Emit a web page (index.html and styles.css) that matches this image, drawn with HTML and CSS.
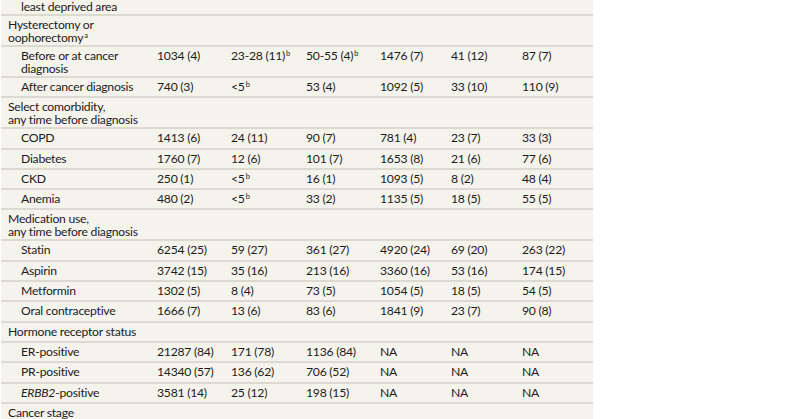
FILE: index.html
```html
<!DOCTYPE html>
<html lang="en">
<head>
<meta charset="utf-8">
<title>Table</title>
<link rel="stylesheet" href="styles.css">
</head>
<body>
<div class="table">
  <div class="row">
    <div class="label sub">Lives in the<br>least deprived area</div>
    <div class="val">5109 (20)</div><div class="val">41 (19)</div><div class="val">262 (19)</div><div class="val">4313 (21)</div><div class="val">70 (21)</div><div class="val">245 (21)</div>
  </div>
  <div class="row">
    <div class="label">Hysterectomy or<br>oophorectomy<sup>a</sup></div>
  </div>
  <div class="row">
    <div class="label sub">Before or at cancer<br>diagnosis</div>
    <div class="val">1034 (4)</div><div class="val">23-28 (11)<sup>b</sup></div><div class="val">50-55 (4)<sup>b</sup></div><div class="val">1476 (7)</div><div class="val">41 (12)</div><div class="val">87 (7)</div>
  </div>
  <div class="row single">
    <div class="label sub">After cancer diagnosis</div>
    <div class="val">740 (3)</div><div class="val">&lt;5<sup>b</sup></div><div class="val">53 (4)</div><div class="val">1092 (5)</div><div class="val">33 (10)</div><div class="val">110 (9)</div>
  </div>
  <div class="row">
    <div class="label">Select comorbidity,<br>any time before diagnosis</div>
  </div>
  <div class="row single">
    <div class="label sub">COPD</div>
    <div class="val">1413 (6)</div><div class="val">24 (11)</div><div class="val">90 (7)</div><div class="val">781 (4)</div><div class="val">23 (7)</div><div class="val">33 (3)</div>
  </div>
  <div class="row single">
    <div class="label sub">Diabetes</div>
    <div class="val">1760 (7)</div><div class="val">12 (6)</div><div class="val">101 (7)</div><div class="val">1653 (8)</div><div class="val">21 (6)</div><div class="val">77 (6)</div>
  </div>
  <div class="row single">
    <div class="label sub">CKD</div>
    <div class="val">250 (1)</div><div class="val">&lt;5<sup>b</sup></div><div class="val">16 (1)</div><div class="val">1093 (5)</div><div class="val">8 (2)</div><div class="val">48 (4)</div>
  </div>
  <div class="row single">
    <div class="label sub">Anemia</div>
    <div class="val">480 (2)</div><div class="val">&lt;5<sup>b</sup></div><div class="val">33 (2)</div><div class="val">1135 (5)</div><div class="val">18 (5)</div><div class="val">55 (5)</div>
  </div>
  <div class="row">
    <div class="label">Medication use,<br>any time before diagnosis</div>
  </div>
  <div class="row single">
    <div class="label sub">Statin</div>
    <div class="val">6254 (25)</div><div class="val">59 (27)</div><div class="val">361 (27)</div><div class="val">4920 (24)</div><div class="val">69 (20)</div><div class="val">263 (22)</div>
  </div>
  <div class="row single">
    <div class="label sub">Aspirin</div>
    <div class="val">3742 (15)</div><div class="val">35 (16)</div><div class="val">213 (16)</div><div class="val">3360 (16)</div><div class="val">53 (16)</div><div class="val">174 (15)</div>
  </div>
  <div class="row single">
    <div class="label sub">Metformin</div>
    <div class="val">1302 (5)</div><div class="val">8 (4)</div><div class="val">73 (5)</div><div class="val">1054 (5)</div><div class="val">18 (5)</div><div class="val">54 (5)</div>
  </div>
  <div class="row single">
    <div class="label sub">Oral contraceptive</div>
    <div class="val">1666 (7)</div><div class="val">13 (6)</div><div class="val">83 (6)</div><div class="val">1841 (9)</div><div class="val">23 (7)</div><div class="val">90 (8)</div>
  </div>
  <div class="row single">
    <div class="label">Hormone receptor status</div>
  </div>
  <div class="row single">
    <div class="label sub">ER-positive</div>
    <div class="val">21287 (84)</div><div class="val">171 (78)</div><div class="val">1136 (84)</div><div class="val">NA</div><div class="val">NA</div><div class="val">NA</div>
  </div>
  <div class="row single">
    <div class="label sub">PR-positive</div>
    <div class="val">14340 (57)</div><div class="val">136 (62)</div><div class="val">706 (52)</div><div class="val">NA</div><div class="val">NA</div><div class="val">NA</div>
  </div>
  <div class="row single">
    <div class="label sub"><i>ERBB2</i>-positive</div>
    <div class="val">3581 (14)</div><div class="val">25 (12)</div><div class="val">198 (15)</div><div class="val">NA</div><div class="val">NA</div><div class="val">NA</div>
  </div>
  <div class="row single">
    <div class="label">Cancer stage</div>
  </div>
  <div class="row single">
    <div class="label sub">I</div>
  </div>
</div>
</body>
</html>
```
FILE: styles.css
```css
html, body {
  margin: 0;
  padding: 0;
  background: #ffffff;
}

body {
  font-family: Lato, "Liberation Sans", sans-serif;
  font-size: 12.2px;
  letter-spacing: -0.25px;
  line-height: 13px;
  color: #1e1b1c;
  overflow: hidden;
}

.table {
  width: 592px;
  margin-left: 1px;
  margin-top: -15px;
  background: #f4f3ec;
}

.row {
  display: grid;
  grid-template-columns: 156px 74px 75px 74px 71px 71px 71px;
  box-sizing: border-box;
  padding: 2px 0 1px;
  border-bottom: 2px solid #dcdad0;
}

.row.single {
  min-height: 20.3px;
}

.label {
  padding-left: 7px;
}

.label.sub {
  padding-left: 20px;
}

.val {
  white-space: nowrap;
}

sup {
  font-size: 7.5px;
  line-height: 0;
  vertical-align: 4px;
  margin-left: 1px;
  letter-spacing: 0;
}
```
